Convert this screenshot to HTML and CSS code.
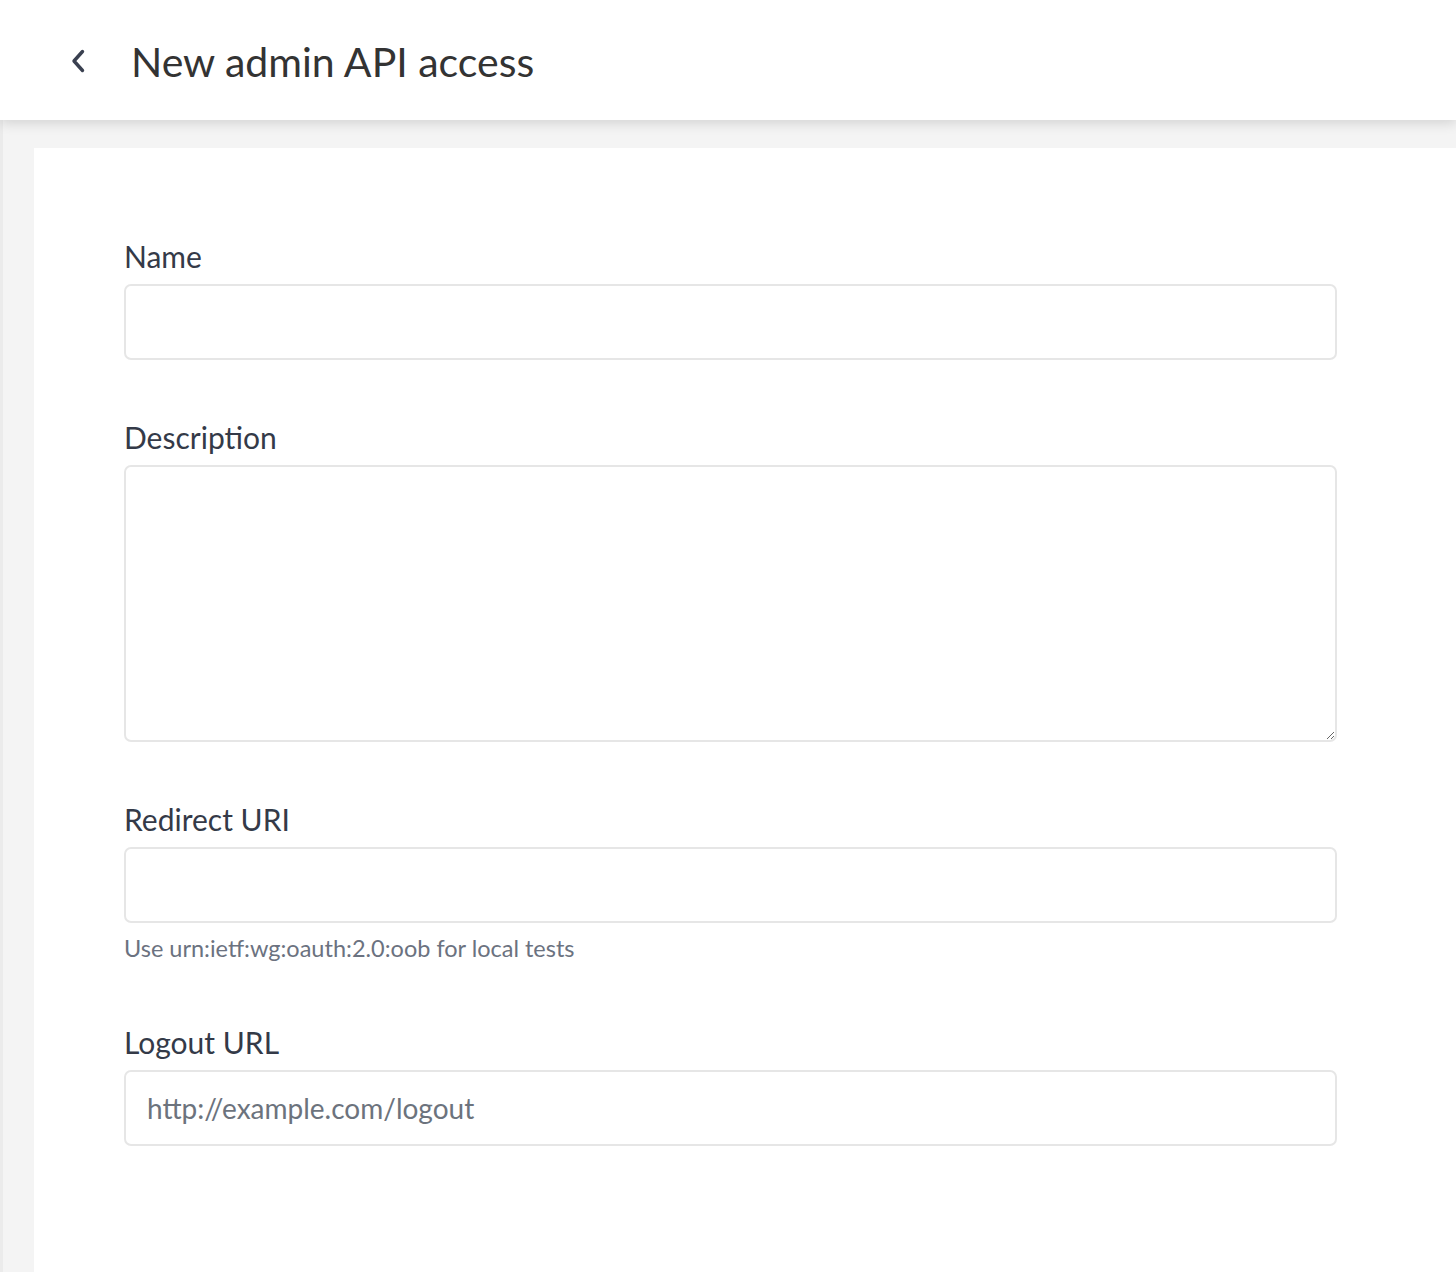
FILE: index.html
```html
<!DOCTYPE html>
<html lang="en">
<head>
<meta charset="utf-8">
<title>New admin API access</title>
<link rel="stylesheet" href="styles.css">
</head>
<body>
<header class="topbar">
  <a class="back" href="#" aria-label="Back">
    <svg width="18" height="24" viewBox="0 0 18 24"><path d="M13.5 2.5 L5 12 L13.5 21.5" fill="none" stroke="#3a4050" stroke-width="3.4" stroke-linecap="round" stroke-linejoin="round"/></svg>
  </a>
  <h1 class="title">New admin API access</h1>
</header>
<main class="page">
  <section class="card">
    <form class="form">
      <div class="field">
        <label class="label" for="name">Name</label>
        <input class="input" id="name" type="text">
      </div>
      <div class="field">
        <label class="label" for="desc">Description</label>
        <textarea class="input textarea" id="desc"></textarea>
      </div>
      <div class="field">
        <label class="label" for="redirect">Redirect URI</label>
        <input class="input" id="redirect" type="text">
        <p class="help">Use urn:ietf:wg:oauth:2.0:oob for local tests</p>
      </div>
      <div class="field">
        <label class="label" for="logout">Logout URL</label>
        <input class="input" id="logout" type="text" placeholder="http://example.com/logout">
      </div>
    </form>
  </section>
</main>
</body>
</html>
```
FILE: styles.css
```css
* { box-sizing: border-box; }
html, body { margin: 0; padding: 0; }
body {
  font-family: "Lato", "Open Sans", sans-serif;
  background: #f4f4f4;
  color: #343a48;
  height: 1272px;
  overflow: hidden;
}
.topbar {
  height: 120px;
  background: #fff;
  display: flex;
  align-items: center;
  padding-left: 69px;
  box-shadow: 0 3px 12px rgba(0,0,0,0.14);
  position: relative;
  z-index: 2;
}
.back { display: flex; width: 18px; height: 24px; margin-top: 2px; }
.title {
  margin: 0 0 0 44px;
  font-weight: 400;
  font-size: 41px;
  color: #333;
  line-height: 1;
  margin-top: 2px;
}
.page {
  padding: 28px 0 0 31px;
  border-left: 3px solid #ebebeb;
}
.card {
  background: #fff;
  min-height: 1200px;
  padding: 88px 0 0 90px;
}
.form { width: 1213px; display: flex; flex-direction: column; gap: 57px; }
.field { display: flex; flex-direction: column; }
.label {
  font-size: 30px;
  line-height: 40px;
  margin-bottom: 8px;
  color: #343a48;
}
.input {
  width: 100%;
  height: 76px;
  border: 2px solid #e6e6e6;
  border-radius: 7px;
  background: #fff;
  font-family: inherit;
  font-size: 28px;
  padding: 0 21px;
  color: #333;
  outline: none;
}
.input::placeholder { color: #6c737d; }
.textarea { height: 277px; resize: vertical; display: block; }
.help {
  margin: 8px 0 0;
  font-size: 23.5px;
  line-height: 34px;
  color: #6b7280;
}
```
